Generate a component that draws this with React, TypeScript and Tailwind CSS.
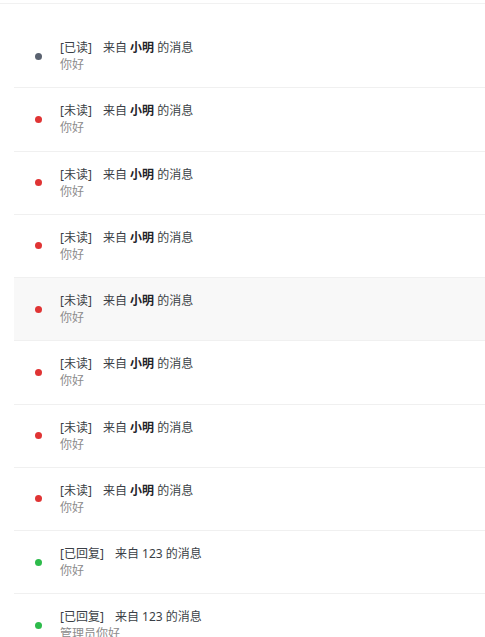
import React from 'react';

type Msg = {
  status: 'read' | 'unread' | 'replied';
  from: string;
  body: string;
  bold?: boolean;
};

const MESSAGES: Msg[] = [
  { status: 'read', from: '小明', body: '你好', bold: true },
  { status: 'unread', from: '小明', body: '你好', bold: true },
  { status: 'unread', from: '小明', body: '你好', bold: true },
  { status: 'unread', from: '小明', body: '你好', bold: true },
  { status: 'unread', from: '小明', body: '你好', bold: true },
  { status: 'unread', from: '小明', body: '你好', bold: true },
  { status: 'unread', from: '小明', body: '你好', bold: true },
  { status: 'unread', from: '小明', body: '你好', bold: true },
  { status: 'replied', from: '123', body: '你好' },
  { status: 'replied', from: '123', body: '管理员你好' },
];

const LABEL = { read: '[已读]', unread: '[未读]', replied: '[已回复]' };
const DOT = { read: 'bg-[#5a6270]', unread: 'bg-[#e03434]', replied: 'bg-[#2dbb4b]' };

export default function App() {
  return (
    <div
      className="h-[637px] overflow-hidden bg-white text-[12px] leading-[17.125px]"
      style={{ fontFamily: '"Noto Sans", "Noto Sans CJK SC", sans-serif' }}
    >
      <div className="h-[3px]" />
      <div className="border-t border-[#f1f1f1] pt-[21px] pl-[14px]">
        {MESSAGES.map((m, i) => (
          <div
            key={i}
            className={`flex items-center border-b border-[#f0f0f0] py-[14px] pl-[21px] ${i === 4 ? 'bg-[#f8f8f8]' : ''}`}
          >
            <span className={`w-[7px] h-[7px] rounded-full shrink-0 ${DOT[m.status]}`} />
            <div className="ml-[18px]">
              <div className="text-[#3b3f46]">
                <span className="mr-[11px]">{LABEL[m.status]}</span>
                来自 {m.bold ? <b className="font-bold text-[#1f2329]">{m.from}</b> : m.from} 的消息
              </div>
              <div className="text-[#8c8c8c]">{m.body}</div>
            </div>
          </div>
        ))}
      </div>
    </div>
  );
}
